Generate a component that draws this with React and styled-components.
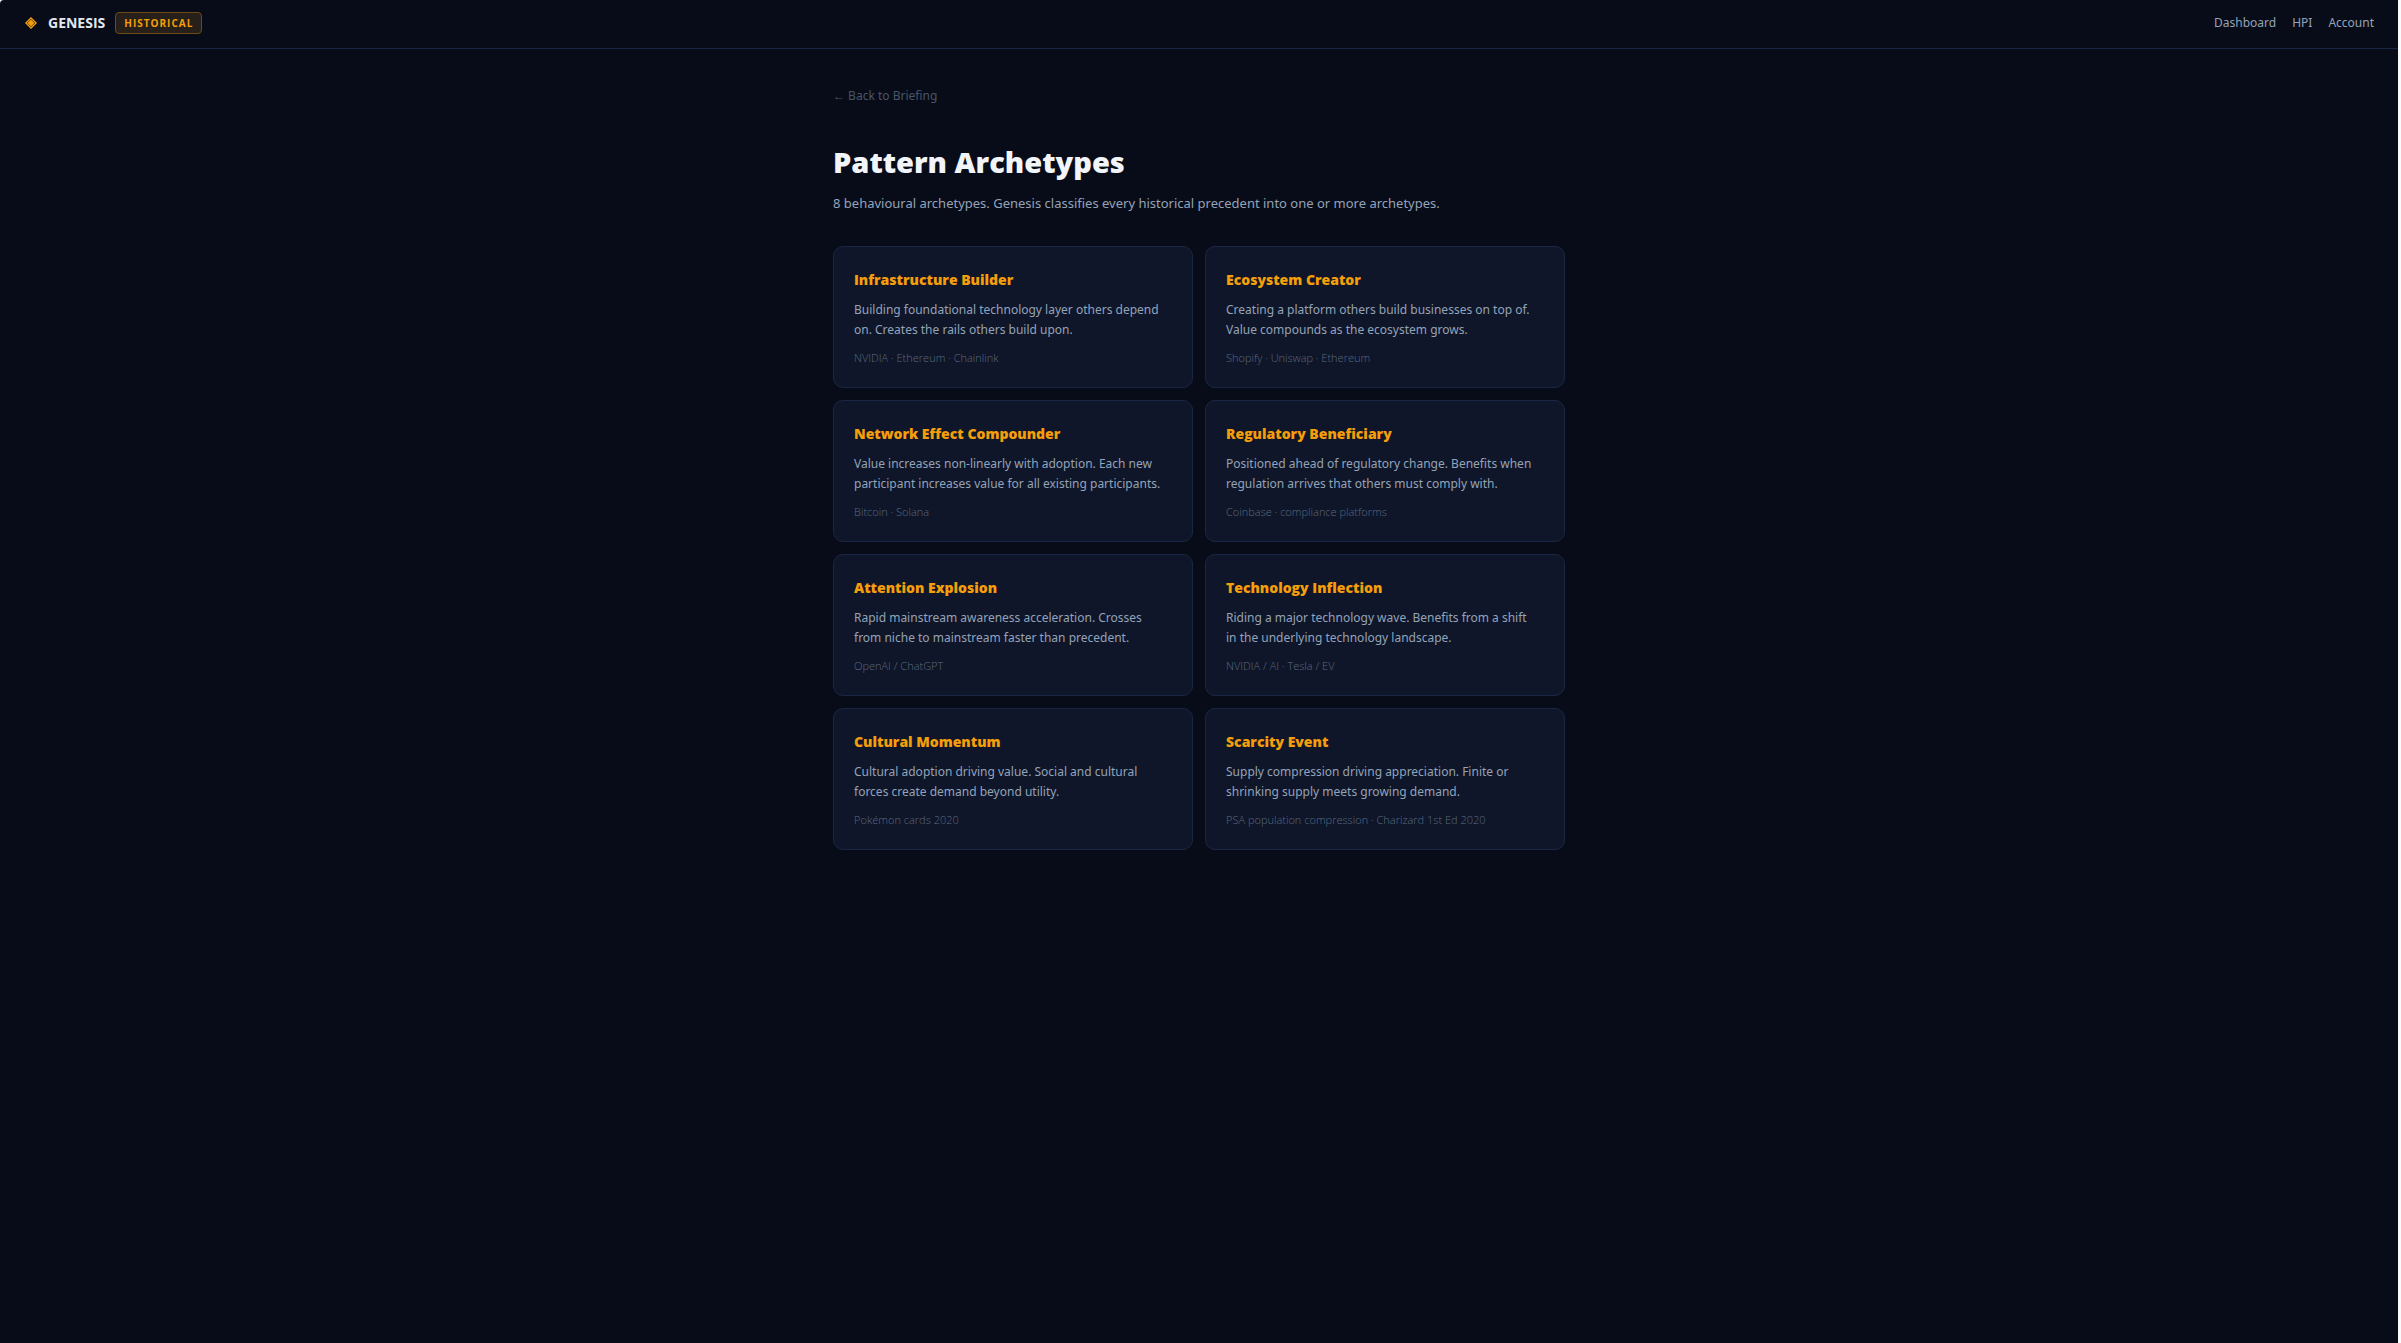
import React from "react";
import styled, { createGlobalStyle } from "styled-components";

const archetypes = [
  {
    name: "Infrastructure Builder",
    text: "Building foundational technology layer others depend on. Creates the rails others build upon.",
    examples: "NVIDIA · Ethereum · Chainlink",
  },
  {
    name: "Ecosystem Creator",
    text: "Creating a platform others build businesses on top of. Value compounds as the ecosystem grows.",
    examples: "Shopify · Uniswap · Ethereum",
  },
  {
    name: "Network Effect Compounder",
    text: "Value increases non-linearly with adoption. Each new participant increases value for all existing participants.",
    examples: "Bitcoin · Solana",
  },
  {
    name: "Regulatory Beneficiary",
    text: "Positioned ahead of regulatory change. Benefits when regulation arrives that others must comply with.",
    examples: "Coinbase · compliance platforms",
  },
  {
    name: "Attention Explosion",
    text: "Rapid mainstream awareness acceleration. Crosses from niche to mainstream faster than precedent.",
    examples: "OpenAI / ChatGPT",
  },
  {
    name: "Technology Inflection",
    text: "Riding a major technology wave. Benefits from a shift in the underlying technology landscape.",
    examples: "NVIDIA / AI · Tesla / EV",
  },
  {
    name: "Cultural Momentum",
    text: "Cultural adoption driving value. Social and cultural forces create demand beyond utility.",
    examples: "Pokémon cards 2020",
  },
  {
    name: "Scarcity Event",
    text: "Supply compression driving appreciation. Finite or shrinking supply meets growing demand.",
    examples: "PSA population compression · Charizard 1st Ed 2020",
  },
];

const App = () => {
  return (
    <Page>
      <GlobalStyle />
      <Nav>
        <Brand href="#">
          <Logo viewBox="0 0 12 12" aria-hidden="true">
            <path d="M6 0L12 6L6 12L0 6Z" fill="#f59e0b" />
            <path
              d="M6 2.2L9.8 6L6 9.8L2.2 6Z"
              fill="none"
              stroke="#080c18"
              strokeWidth="0.6"
            />
          </Logo>
          <span>GENESIS</span>
          <Badge>HISTORICAL</Badge>
        </Brand>
        <Links>
          <a href="#dashboard">Dashboard</a>
          <a href="#hpi">HPI</a>
          <a href="#account">Account</a>
        </Links>
      </Nav>
      <Main>
        <Back href="#briefing">← Back to Briefing</Back>
        <h1>Pattern Archetypes</h1>
        <Intro>
          8 behavioural archetypes. Genesis classifies every historical
          precedent into one or more archetypes.
        </Intro>
        <Grid>
          {archetypes.map((item) => (
            <Card key={item.name}>
              <h2>{item.name}</h2>
              <p>{item.text}</p>
              <small>{item.examples}</small>
            </Card>
          ))}
        </Grid>
      </Main>
    </Page>
  );
};

// Style
const GlobalStyle = createGlobalStyle`
  * {
    margin: 0;
    padding: 0;
    box-sizing: border-box;
  }
  body {
    padding-right: 3px;
    background: #fafafa;
    font-family: "Noto Sans", "Open Sans", sans-serif;
  }
  a {
    color: inherit;
    text-decoration: none;
  }
`;

const Page = styled.div`
  min-height: 100vh;
  border-top-left-radius: 4px;
  background: #080c18;
  color: #f1f5f9;
`;

const Nav = styled.nav`
  display: flex;
  align-items: center;
  justify-content: space-between;
  height: 49px;
  padding: 0 24px 3px;
  border-bottom: 1px solid #1a2744;
`;

const Brand = styled.a`
  display: flex;
  align-items: center;
  gap: 10px;
  font-family: "Open Sans", sans-serif;
  font-size: 14px;
  font-weight: 700;
  color: #e2e8f0;
`;

const Logo = styled.svg`
  width: 14px;
  height: 12px;
`;

const Badge = styled.span`
  padding: 0 8px;
  border: 1px solid #6b4a14;
  border-radius: 4px;
  background: #271f19;
  color: #f59e0b;
  font-size: 10px;
  line-height: 20px;
  letter-spacing: 1px;
`;

const Links = styled.div`
  display: flex;
  gap: 16px;
  font-size: 12px;
  color: #94a3b8;
`;

const Main = styled.main`
  max-width: 780px;
  margin: 0 auto;
  padding: 37px 24px;
  h1 {
    margin-top: 34px;
    font-family: "Open Sans", sans-serif;
    font-size: 29px;
    line-height: 44px;
    font-weight: 800;
  }
`;

const Back = styled.a`
  display: block;
  font-size: 12px;
  line-height: 20px;
  color: #475569;
`;

const Intro = styled.p`
  margin: 9px 0 33px;
  font-size: 13px;
  line-height: 20px;
  color: #94a3b8;
`;

const Grid = styled.div`
  display: grid;
  grid-template-columns: 1fr 1fr;
  gap: 12px;
`;

const Card = styled.article`
  padding: 21px 20px 19px;
  border: 1px solid #1a2744;
  border-radius: 10px;
  background: #0f1629;
  h2 {
    margin-bottom: 8px;
    color: #f59e0b;
    font-family: "Open Sans", sans-serif;
    font-size: 14px;
    line-height: 24px;
    font-weight: 800;
  }
  p {
    margin-bottom: 8px;
    padding-right: 8px;
    color: #94a3b8;
    font-size: 12px;
    line-height: 20px;
  }
  small {
    display: block;
    color: #5a6980;
    font-family: "Open Sans", sans-serif;
    font-size: 11px;
    font-weight: 300;
    line-height: 20px;
  }
`;

export default App;
